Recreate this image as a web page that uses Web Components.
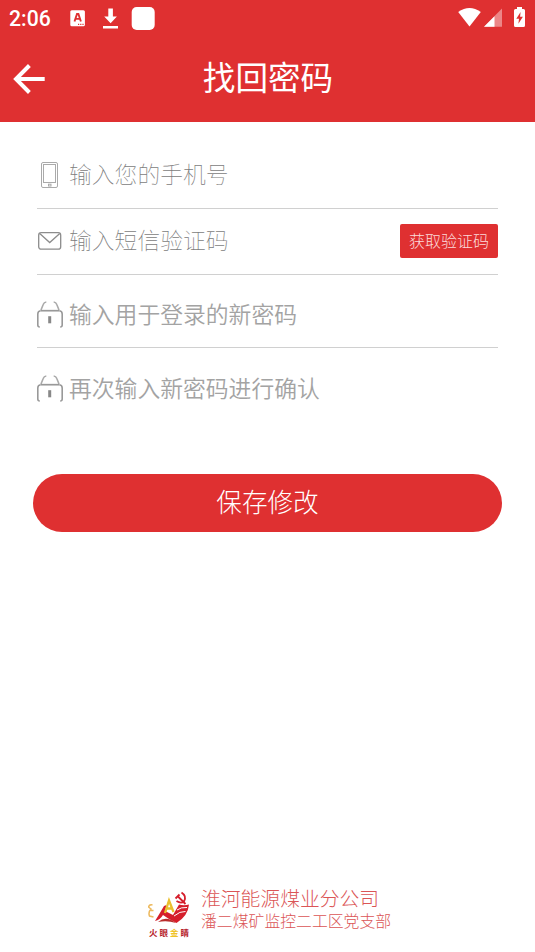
<!DOCTYPE html>
<html lang="zh-CN">
<head>
<meta charset="utf-8">
<title>找回密码</title>
<style>
html,body{margin:0;height:100%;background:#fff}
body{font-family:"Noto Sans CJK SC","Noto Sans",sans-serif;overflow:hidden}
</style>
</head>
<body>
<reset-page></reset-page>
<script>
const define = (name, html) => customElements.define(name, class extends HTMLElement {
  constructor() {
    super();
    const t = document.createElement('template');
    t.innerHTML = html;
    this.attachShadow({mode: 'open'}).append(t.content.cloneNode(true));
  }
});

define('status-bar', `
<style>
:host{display:flex;height:36px;align-items:center;color:#fff;padding:0 9px 0 9px;box-sizing:border-box}
time{font:500 21.2px/36px Roboto,sans-serif;width:61px;padding-top:1px;box-sizing:border-box}
svg{display:block}
.left{flex:1}
</style>
<time>2:06</time>
<svg class="left" width="100" height="36" viewBox="70 0 100 36" preserveAspectRatio="xMinYMid meet" fill="#fff">
  <rect x="70.300" y="10.300" width="14.600" height="16" rx="1.500"/>
  <path d="M74.500 21.500 77 14h1.400l2.500 7.500M75.600 18.900h4.400" fill="none" stroke="#df3031" stroke-width="1.900"/>
  <path d="M78 24.300h1.200m1 0h1.200m1 0h1.200" stroke="#df3031" stroke-width="1.200"/>
  <path d="M108.300 8.500h4.600v8h4L110.600 23.200 104.200 16.500h4.100zM103 26h15v2.600h-15z"/>
  <rect x="131.700" y="7" width="23" height="23" rx="5"/>
</svg>
<svg width="68" height="36" viewBox="458 0 68 36" fill="#fff">
  <path d="M458.200 12.100Q469.500 3.800 480.800 12.100L469.500 26.500Z"/>
  <path d="M502 8.500V26.800H484Z" opacity=".42"/>
  <path d="M494.500 16.200V26.800H484Z"/>
  <path d="M517 7h5v2h1.500q1.500 0 1.500 1.500v15q0 1.500-1.500 1.500h-8q-1.500 0-1.500-1.500v-15q0-1.500 1.500-1.500h1.500z"/>
  <path d="M520.600 12 516.300 18.800h2.700l-.6 5 4.500-7h-2.800z" fill="#df3031"/>
</svg>`);

define('title-bar', `
<style>
:host{display:grid;grid-template-columns:60px 1fr 60px;height:86px;align-items:center}
svg{display:block;margin-left:12px}
h1{margin:0 0 7px 1px;text-align:center;color:#fff;font-size:32.6px;line-height:48px;font-weight:400}
</style>
<svg width="34" height="34" viewBox="0 0 34 34" fill="none" stroke="#fff" stroke-width="4"><path d="M17.400 3.500 4 17 17.400 30.500M4 17H32.700"/></svg>
<h1><slot></slot></h1>`);

define('field-row', `
<style>
:host{display:flex;box-sizing:border-box;height:var(--h);border-bottom:1px solid #d0d0d0;align-items:flex-end;padding-bottom:var(--pb)}
:host([last]){border:0}
.icon{width:26px;height:34px;margin-right:6px;flex:none}
.label{flex:1;font-size:22.8px;line-height:34px;padding-bottom:1px;font-weight:var(--w,350);color:var(--c,#a3a3a3);white-space:nowrap}
</style>
<div class="icon"><slot name="icon"></slot></div>
<div class="label"><slot></slot></div>
<slot name="action"></slot>`);

define('phone-icon', `
<style>:host,svg{display:block}</style>
<svg width="26" height="34" fill="none" stroke="#aaa" stroke-width="1">
<rect x="4.500" y="4.500" width="16" height="25" rx="1.500"/><rect x="6.500" y="6.500" width="12" height="18"/>
<rect x="11.500" y="26.200" width="2.500" height="1.800"/></svg>`);
define('mail-icon', `
<style>:host,svg{display:block}</style>
<svg width="26" height="34" fill="none" stroke="#8c8c8c" stroke-width="1.300">
<rect x="1.700" y="8.700" width="22" height="16.500" rx="2.500"/><path d="M3 9.700 12.700 18.500 22.500 9.700"/></svg>`);
define('lock-icon', `
<style>:host,svg{display:block}</style>
<svg width="27" height="34" fill="none" stroke="#999" stroke-width="1.600">
<path d="M4 12 6.200 6.500Q7 4.200 9.300 4M22 12 19.800 6.500Q19 4.200 16.700 4" stroke="#aaa"/>
<path d="M3.500 12.700H22.500" stroke="#999" stroke-width="1.700"/>
<path d="M3.500 12.700Q.8 13 .8 16V27Q.8 29 2.800 29M22.500 12.700Q25.200 13 25.200 16V27Q25.200 29 23.200 29"/>
<path d="M12.700 18.200V25.300" stroke="#888" stroke-width="3"/></svg>`);

define('code-button', `
<style>
:host{display:block;width:98px;height:34px}
button{display:block;width:100%;height:100%;padding:0 0 2px;border:0;border-radius:2px;background:#df3031;color:#fbdada;font:300 16px/32px "Noto Sans CJK SC",sans-serif;white-space:nowrap}
</style><button><slot></slot></button>`);

define('save-button', `
<style>
:host{display:block;margin:52px 33px 0}
button{display:block;width:100%;height:58px;padding:0 0 5px;border:0;border-radius:29px;background:#df3031;color:#fff;font:300 25.6px/53px "Noto Sans CJK SC",sans-serif}
</style><button><slot></slot></button>`);

define('brand-logo', `
<style>
:host{display:block;width:42px}
svg{display:block}
.name{display:flex;justify-content:space-between;font-size:8.500px;line-height:10px;font-weight:700;color:#b6242c;margin:0 0 0 1px;width:40px}
.gold{color:#efc329}
</style>
<svg width="44" height="36" viewBox="148 892 44 36" fill="none">
<path d="M152.500 906q-3-1-4 2l2.500 2q-3 3-1.500 7l4 1M150.500 911.500h3" stroke="#edb95e" stroke-width="1.500"/>
<path d="M155 922Q160 914 164 907L166.500 906 165 912 173 916 179 905.500Q184 907 189 905.500 188 917 176.500 924L169 920 163 916Q160 921 155 922Z" fill="#d51e2b"/>
<path d="M158 923Q166 916 176 924Q167 921 158 923Z" fill="#b92b2c"/>
<path d="M165 914 169 901.500 173.500 913M167 909.500h5" stroke="#eabf2d" stroke-width="2.300"/>
<path d="M177 911Q181 908 187 908.500M174 917Q180 912 185.500 912.500" stroke="#fff" stroke-width="1"/>
<path d="M181.500 893.500Q187 897 184 902.500Q181 905 176.500 902M175.500 899.500 179.500 895.500M178 897.500 185.500 905" stroke="#d51e2b" stroke-width="1.800"/>
</svg>
<div class="name"><span>火</span><span>眼</span><span class="gold">金</span><span>睛</span></div>`);

define('org-footer', `
<style>
:host{display:flex;margin:auto 0 14px 148px;height:47px}
.text{margin-left:11px;color:#db5556;font-weight:300;white-space:nowrap}
.a{font-size:19.8px;line-height:24px;margin-top:-5px}
.b{font-size:15.850px;line-height:22px}
</style>
<brand-logo></brand-logo>
<div class="text"><div class="a">淮河能源煤业分公司</div><div class="b">潘二煤矿监控二工区党支部</div></div>`);

define('reset-page', `
<style>
:host{display:flex;flex-direction:column;height:952px;width:535px;background:#fff}
header{background:#df3031;height:122px}
form{margin:0 37px}
</style>
<header><status-bar></status-bar><title-bar>找回密码</title-bar></header>
<form>
<field-row style="--h:87px;--pb:16px;--w:100;--c:#7c7c7c"><phone-icon slot="icon"></phone-icon>输入您的手机号</field-row>
<field-row style="--h:66px;--pb:16px;--w:100;--c:#7c7c7c"><mail-icon slot="icon"></mail-icon>输入短信验证码<code-button slot="action">获取验证码</code-button></field-row>
<field-row style="--h:73px;--pb:15px"><lock-icon slot="icon"></lock-icon>输入用于登录的新密码</field-row>
<field-row last style="--h:74px;--pb:16px"><lock-icon slot="icon"></lock-icon>再次输入新密码进行确认</field-row>
</form>
<save-button>保存修改</save-button>
<org-footer></org-footer>`);
</script>
</body>
</html>
